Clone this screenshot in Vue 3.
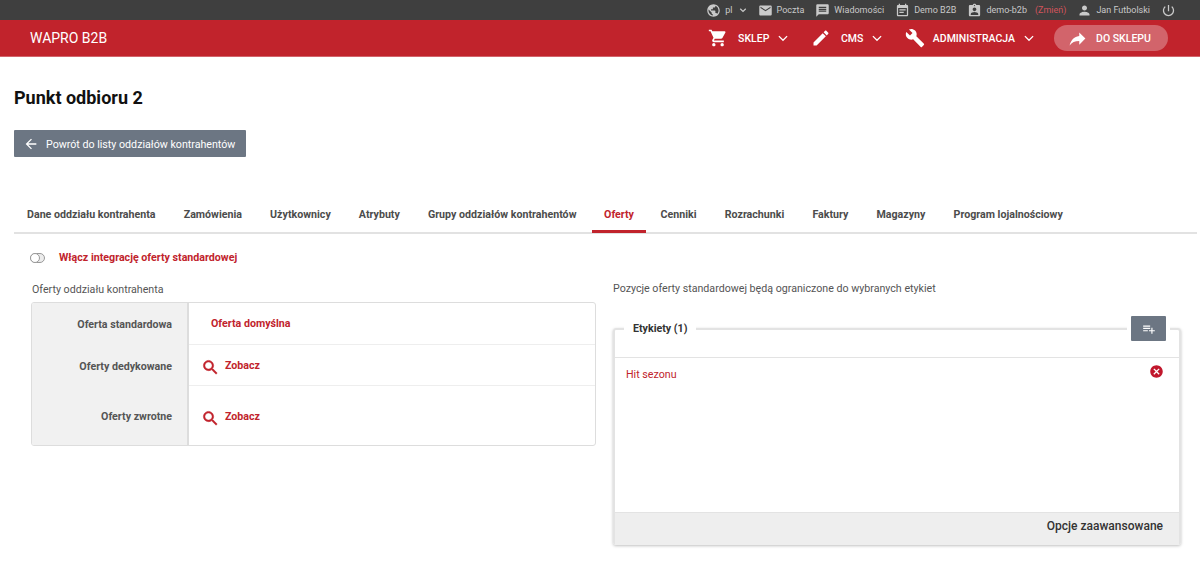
<script setup>
const icons = {
  globe: 'M12 2C6.48 2 2 6.48 2 12s4.48 10 10 10 10-4.48 10-10S17.52 2 12 2zm-1 17.93c-3.95-.49-7-3.85-7-7.93 0-.62.08-1.21.21-1.79L9 15v1c0 1.1.9 2 2 2v1.93zm6.9-2.54c-.26-.81-1-1.39-1.9-1.39h-1v-3c0-.55-.45-1-1-1H8v-2h2c.55 0 1-.45 1-1V7h2c1.1 0 2-.9 2-2v-.41c2.93 1.19 5 4.06 5 7.41 0 2.08-.8 3.97-2.1 5.39z',
  mail: 'M20 4H4c-1.1 0-1.99.9-1.99 2L2 18c0 1.1.9 2 2 2h16c1.1 0 2-.9 2-2V6c0-1.1-.9-2-2-2zm0 4l-8 5-8-5V6l8 5 8-5v2z',
  message: 'M20 2H4c-1.1 0-1.99.9-1.99 2L2 22l4-4h14c1.1 0 2-.9 2-2V4c0-1.1-.9-2-2-2zm-2 12H6v-2h12v2zm0-3H6V9h12v2zm0-3H6V6h12v2z',
  event: 'M17 10H7v2h10v-2zm2-7h-1V1h-2v2H8V1H6v2H5c-1.11 0-1.99.9-1.99 2L3 19c0 1.1.89 2 2 2h14c1.1 0 2-.9 2-2V5c0-1.1-.9-2-2-2zm0 16H5V8h14v11zm-5-5H7v2h7v-2z',
  badge: 'M19 3h-4.18C14.4 1.84 13.3 1 12 1c-1.3 0-2.4.84-2.82 2H5c-1.1 0-2 .9-2 2v14c0 1.1.9 2 2 2h14c1.1 0 2-.9 2-2V5c0-1.1-.9-2-2-2zm-7 0c.55 0 1 .45 1 1s-.45 1-1 1-1-.45-1-1 .45-1 1-1zm0 4c1.66 0 3 1.34 3 3s-1.34 3-3 3-3-1.34-3-3 1.34-3 3-3zm6 12H6v-1.4c0-2 4-3.1 6-3.1s6 1.1 6 3.1V19z',
  person: 'M12 12c2.21 0 4-1.79 4-4s-1.79-4-4-4-4 1.79-4 4 1.79 4 4 4zm0 2c-2.67 0-8 1.34-8 4v2h16v-2c0-2.66-5.33-4-8-4z',
  power: 'M13 3h-2v10h2V3zm4.83 2.17l-1.42 1.42C17.99 7.86 19 9.81 19 12c0 3.87-3.13 7-7 7s-7-3.13-7-7c0-2.19 1.01-4.14 2.58-5.42L6.17 5.17C4.23 6.82 3 9.26 3 12c0 4.97 4.03 9 9 9s9-4.03 9-9c0-2.74-1.23-5.18-3.17-6.83z',
  cart: 'M7 18c-1.1 0-1.99.9-1.99 2S5.9 22 7 22s2-.9 2-2-.9-2-2-2zM1 2v2h2l3.6 7.59-1.35 2.45c-.16.28-.25.61-.25.96 0 1.1.9 2 2 2h12v-2H7.42c-.14 0-.25-.11-.25-.25l.03-.12.9-1.63h7.45c.75 0 1.41-.41 1.75-1.03l3.58-6.49c.08-.14.12-.31.12-.48 0-.55-.45-1-1-1H5.21l-.94-2H1zm16 16c-1.1 0-1.99.9-1.99 2s.89 2 1.99 2 2-.9 2-2-.9-2-2-2z',
  edit: 'M3 17.25V21h3.75L17.81 9.94l-3.75-3.75L3 17.25zM20.71 7.04c.39-.39.39-1.02 0-1.41l-2.34-2.34c-.39-.39-1.02-.39-1.41 0l-1.83 1.83 3.75 3.75 1.83-1.83z',
  wrench: 'M22.7 19l-9.1-9.1c.9-2.3.4-5-1.5-6.9-2-2-5-2.4-7.4-1.3L9 6 6 9 1.6 4.7C.4 7.1.9 10.1 2.9 12.1c1.9 1.9 4.6 2.4 6.9 1.5l9.1 9.1c.4.4 1 .4 1.4 0l2.3-2.3c.5-.4.5-1.1.1-1.4z',
  forward: 'M14 9V5l7 7-7 7v-4.1c-5 0-8.5 1.6-11 5.1 1-5 4-10 11-11z',
  back: 'M20 11H7.83l5.59-5.59L12 4l-8 8 8 8 1.41-1.41L7.83 13H20v-2z',
  add: 'M14 10H2v2h12v-2zm0-4H2v2h12V6zm4 8v-4h-2v4h-4v2h4v4h2v-4h4v-2h-4zM2 16h8v-2H2v2z',
  cancel: 'M12 2C6.47 2 2 6.47 2 12s4.47 10 10 10 10-4.47 10-10S17.53 2 12 2zm5 13.59L15.59 17 12 13.41 8.41 17 7 15.59 10.59 12 7 8.41 8.41 7 12 10.59 15.59 7 17 8.41 13.41 12 17 15.59z',
  search: 'M15.5 14h-.79l-.28-.27C15.41 12.59 16 11.11 16 9.5 16 5.91 13.09 3 9.5 3S3 5.91 3 9.5 5.91 16 9.5 16c1.61 0 3.09-.59 4.23-1.57l.27.28v.79l5 4.99L20.49 19l-4.99-5zm-6 0C7.01 14 5 11.99 5 9.5S7.01 5 9.5 5 14 7.01 14 9.5 11.99 14 9.5 14z',
  chevron: 'M6.5 9.5l5.5 5.5 5.5-5.5'
}

const tabs = ['Dane oddziału kontrahenta', 'Zamówienia', 'Użytkownicy', 'Atrybuty', 'Grupy oddziałów kontrahentów', 'Oferty', 'Cenniki', 'Rozrachunki', 'Faktury', 'Magazyny', 'Program lojalnościowy']
const activeTab = 'Oferty'

const topLinks = [
  { icon: 'mail', text: 'Poczta' },
  { icon: 'message', text: 'Wiadomości' },
  { icon: 'event', text: 'Demo B2B' }
]
const navLinks = [
  { icon: 'cart', text: 'SKLEP' },
  { icon: 'edit', text: 'CMS' },
  { icon: 'wrench', text: 'ADMINISTRACJA' }
]
</script>

<template>
  <div class="page">
    <div class="topbar">
      <span class="top-item">
        <svg class="ic-top globe" viewBox="0 0 24 24"><path :d="icons.globe" /></svg>
        pl
        <svg class="ic-chev-sm" viewBox="0 0 24 24"><path :d="icons.chevron" /></svg>
      </span>
      <span v-for="link in topLinks" :key="link.text" class="top-item">
        <svg class="ic-top" viewBox="0 0 24 24"><path :d="icons[link.icon]" /></svg>
        {{ link.text }}
      </span>
      <span class="top-item">
        <svg class="ic-top" viewBox="0 0 24 24"><path :d="icons.badge" /></svg>
        demo-b2b
        <span class="change">(Zmień)</span>
      </span>
      <span class="top-item">
        <svg class="ic-top" viewBox="0 0 24 24"><path :d="icons.person" /></svg>
        Jan Futbolski
      </span>
      <svg class="ic-top power" viewBox="0 0 24 24"><path :d="icons.power" /></svg>
    </div>

    <header class="navbar">
      <span class="brand">WAPRO B2B</span>
      <nav class="nav">
        <span v-for="link in navLinks" :key="link.text" class="nav-item">
          <svg class="ic-nav" viewBox="0 0 24 24"><path :d="icons[link.icon]" /></svg>
          <span class="nav-text">{{ link.text }}</span>
          <svg class="ic-chev" viewBox="0 0 24 24"><path :d="icons.chevron" /></svg>
        </span>
      </nav>
      <button class="shop-btn">
        <svg class="ic-forward" viewBox="0 0 24 24"><path :d="icons.forward" /></svg>
        DO SKLEPU
      </button>
    </header>

    <main class="content">
      <h1>Punkt odbioru 2</h1>
      <button class="back-btn">
        <svg viewBox="0 0 24 24"><path :d="icons.back" /></svg>
        Powrót do listy oddziałów kontrahentów
      </button>

      <div class="tabs">
        <span v-for="tab in tabs" :key="tab" class="tab" :class="{ active: tab === activeTab }">{{ tab }}</span>
      </div>

      <label class="switch-row">
        <span class="switch"><span class="knob"></span></span>
        <span>Włącz integrację oferty standardowej</span>
      </label>

      <div class="columns">
        <section class="left">
          <p class="caption left-caption">Oferty oddziału kontrahenta</p>
          <div class="offer-table">
            <div class="offer-row first">
              <div class="offer-label">Oferta standardowa</div>
              <div class="offer-value"><a class="plain-link">Oferta domyślna</a></div>
            </div>
            <div class="offer-row second">
              <div class="offer-label">Oferty dedykowane</div>
              <div class="offer-value">
                <svg class="ic-search" viewBox="0 0 24 24"><path :d="icons.search" /></svg>
                <a>Zobacz</a>
              </div>
            </div>
            <div class="offer-row third">
              <div class="offer-label">Oferty zwrotne</div>
              <div class="offer-value">
                <svg class="ic-search" viewBox="0 0 24 24"><path :d="icons.search" /></svg>
                <a>Zobacz</a>
              </div>
            </div>
          </div>
        </section>

        <section class="right">
          <p class="caption">Pozycje oferty standardowej będą ograniczone do wybranych etykiet</p>
          <div class="labels-card">
            <div class="labels-head"></div>
            <span class="labels-title">Etykiety (1)</span>
            <span class="add-wrap">
              <button class="add-btn">
                <svg viewBox="0 0 24 24"><path :d="icons.add" /></svg>
              </button>
            </span>
            <div class="labels-list">
              <span class="label-name">Hit sezonu</span>
              <svg class="ic-cancel" viewBox="0 0 24 24"><path :d="icons.cancel" /></svg>
            </div>
            <div class="labels-foot">Opcje zaawansowane</div>
          </div>
        </section>
      </div>
    </main>
  </div>
</template>

<style>
html, body {
  margin: 0;
  background: #fff;
}
</style>

<style scoped>
.page {
  font-family: Roboto, "Liberation Sans", sans-serif;
  height: 565px;
  overflow: hidden;
  color: #4a4a4a;
}
svg {
  fill: currentColor;
  display: block;
  flex: none;
}
.topbar {
  height: 20px;
  background: #3f3f3f;
  color: #c9c9c9;
  display: flex;
  align-items: center;
  justify-content: flex-end;
  padding-right: 24px;
  gap: 11px;
  font-size: 9px;
}
.top-item {
  display: flex;
  align-items: center;
  gap: 4px;
}
.ic-top {
  width: 15px;
  height: 15px;
}
.ic-chev-sm {
  width: 12px;
  height: 12px;
  margin-right: -2px;
  fill: none;
  stroke: currentColor;
  stroke-width: 2.4;
}
.change {
  color: #d2545c;
  margin-left: 4px;
}
.navbar {
  height: 36px;
  background: #c1232c;
  border-bottom: 1px solid #d2646b;
  box-sizing: content-box;
  color: #fff;
  display: flex;
  align-items: center;
  padding: 0 32px 0 30px;
}
.brand {
  font-size: 14px;
  margin-right: auto;
}
.nav {
  display: flex;
  gap: 18.5px;
  margin-right: 16px;
}
.nav-item {
  display: flex;
  align-items: center;
}
.ic-nav {
  width: 20px;
  height: 20px;
}
.nav-text {
  font-size: 10.5px;
  font-weight: 500;
  margin: 0 5px 0 10px;
}
.nav-item:last-child .nav-text {
  margin-left: 8px;
}
.ic-chev {
  width: 18px;
  height: 18px;
  fill: none;
  stroke: currentColor;
  stroke-width: 1.7;
}
.shop-btn {
  width: 114px;
  height: 26px;
  border: none;
  border-radius: 13px;
  background: #d2646b;
  color: #fff;
  font: 500 10.5px Roboto, sans-serif;
  display: flex;
  align-items: center;
  justify-content: center;
  gap: 8px;
  padding: 0 4px 0 0;
}
.ic-forward {
  width: 21px;
  height: 21px;
}
.content {
  padding: 0 3px 0 14px;
}
h1 {
  margin: 0;
  padding-top: 30px;
  font-size: 18px;
  line-height: 21px;
  font-weight: 700;
  color: #111;
}
.back-btn {
  margin-top: 22px;
  height: 27px;
  width: 232px;
  border: none;
  border-radius: 1px;
  background: #6c7683;
  color: #fff;
  font: 400 10.67px Roboto, sans-serif;
  white-space: nowrap;
  display: flex;
  align-items: center;
  gap: 7px;
  padding: 1px 0 0 9px;
}
.back-btn svg {
  width: 16px;
  height: 16px;
  margin-top: -1px;
}
.tabs {
  margin-top: 43px;
  display: flex;
  align-items: flex-start;
  height: 34px;
  border-bottom: 2px solid #e2e2e2;
  box-sizing: border-box;
}
.tab {
  padding: 0 13px;
  margin-right: 2.1px;
  font-size: 10.67px;
  font-weight: 700;
  line-height: 30px;
  color: #4c4c4c;
}
.tab.active {
  color: #c1232c;
  border-bottom: 3px solid #c1232c;
  padding: 0 11.5px 0 12.5px;
  height: 30px;
}
.switch-row {
  display: flex;
  align-items: center;
  gap: 13px;
  margin: 17px 0 0 16px;
  color: #c1232c;
  font-size: 10.67px;
  font-weight: 700;
  line-height: 14px;
}
.switch {
  width: 13px;
  height: 8px;
  margin: -1px 1px 0 0;
  border: 1px solid #9a9a9a;
  border-radius: 5px;
  position: relative;
  background: #ececec;
}
.knob {
  position: absolute;
  left: -1px;
  top: -1px;
  width: 8px;
  height: 8px;
  border: 1px solid #9a9a9a;
  border-radius: 50%;
  background: #fff;
}
.columns {
  display: flex;
  gap: 17px;
  margin-top: 18px;
  padding: 0 16px 0 17px;
}
.left {
  width: 565px;
}
.right {
  flex: 1;
  margin-top: -1px;
}
.caption {
  margin: 0;
  font-size: 10.67px;
  line-height: 14px;
  color: #555;
}
.left-caption {
  padding-left: 1px;
}
.offer-table {
  margin-top: 5px;
  border: 1px solid #ddd;
  border-radius: 3px;
  overflow: hidden;
  height: 144px;
  box-sizing: border-box;
  display: flex;
  flex-direction: column;
}
.offer-row {
  display: flex;
}
.offer-row.first { height: 42px; }
.offer-row.second { height: 41px; }
.offer-row.third { flex: 1; }
.offer-label {
  width: 140px;
  flex: none;
  background: #f1f1f1;
  border-right: 2px solid #ddd;
  padding: 15px 15px 0 0;
  text-align: right;
  font-size: 10.67px;
  font-weight: 700;
  color: #555;
}
.offer-row.third .offer-label { padding-top: 24px; }
.offer-value {
  flex: 1;
  display: flex;
  align-items: flex-start;
  padding: 14px 0 0 12px;
  color: #c1232c;
  font-size: 10.67px;
  font-weight: 700;
  gap: 5px;
  border-bottom: 1px solid #eee;
}
.offer-row.third .offer-value {
  border-bottom: none;
  padding-top: 24px;
}
.plain-link {
  padding-left: 10px;
}
.ic-search {
  width: 19px;
  height: 19px;
  margin-top: -1px;
  stroke: currentColor;
  stroke-width: 0.6;
}
.labels-card {
  position: relative;
  margin-top: 32px;
  height: 217px;
  border: 2px solid #e3e3e3;
  border-bottom: none;
  border-radius: 3px;
  box-sizing: border-box;
  box-shadow: 0 1px 3px rgba(0, 0, 0, 0.25);
  display: flex;
  flex-direction: column;
}
.labels-head {
  height: 27px;
  border-bottom: 1px solid #e3e3e3;
  flex: none;
}
.labels-title {
  position: absolute;
  left: 9px;
  top: -8px;
  padding: 0 9px;
  background: #fff;
  font-size: 10.67px;
  font-weight: 700;
  line-height: 14px;
  color: #333;
}
.add-wrap {
  position: absolute;
  right: 9px;
  top: -14px;
  padding: 0 4px;
  background: #fff;
}
.add-btn {
  width: 35px;
  height: 25px;
  border: none;
  border-radius: 1px;
  background: #6c7683;
  color: #fff;
  display: flex;
  align-items: center;
  justify-content: center;
  padding: 0;
}
.add-btn svg {
  width: 14px;
  height: 14px;
}
.labels-list {
  flex: 1;
  display: flex;
  justify-content: space-between;
  align-items: flex-start;
  padding: 9px 15px 0 11px;
  font-size: 10.67px;
  color: #c1232c;
}
.label-name {
  line-height: 14px;
  padding-top: 1px;
}
.ic-cancel {
  width: 15px;
  height: 15px;
  margin-top: -3px;
  color: #c1172c;
}
.labels-foot {
  height: 33px;
  background: #eee;
  border-top: 1px solid #e3e3e3;
  box-sizing: border-box;
  text-align: right;
  padding-right: 16px;
  font-size: 12px;
  font-weight: 500;
  line-height: 26px;
  color: #333;
  flex: none;
}
</style>
